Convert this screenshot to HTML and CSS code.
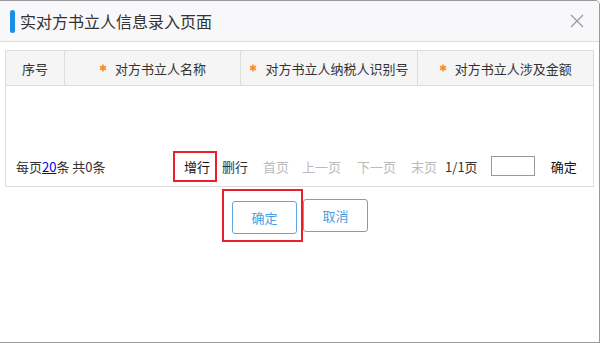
FILE: index.html
```html
<!DOCTYPE html>
<html lang="zh">
<head>
    <meta charset="utf-8">
    <title>实对方书立人信息录入页面</title>
    <link rel="stylesheet" href="styles.css">
</head>
<body>
    <div class="dialog">
        <div class="dialog-head">
            <span class="bar"></span>
            <span class="title">实对方书立人信息录入页面</span>
            <span class="close">
                <svg width="14" height="14" viewBox="0 0 14 14"><path d="M1 1L13 13M13 1L1 13" stroke="#999" stroke-width="1.2" fill="none"/></svg>
            </span>
        </div>
        <div class="grid">
            <div class="grid-head">
                <div class="cell c-no">序号</div>
                <div class="cell c-col"><svg class="star" width="8" height="8" viewBox="0 0 8 8"><path d="M4 0.5V7.5M1 2.2L7 5.8M7 2.2L1 5.8" stroke="#ff8a1f" stroke-width="1.6"/></svg>对方书立人名称</div>
                <div class="cell c-col"><svg class="star" width="8" height="8" viewBox="0 0 8 8"><path d="M4 0.5V7.5M1 2.2L7 5.8M7 2.2L1 5.8" stroke="#ff8a1f" stroke-width="1.6"/></svg>对方书立人纳税人识别号</div>
                <div class="cell c-col"><svg class="star" width="8" height="8" viewBox="0 0 8 8"><path d="M4 0.5V7.5M1 2.2L7 5.8M7 2.2L1 5.8" stroke="#ff8a1f" stroke-width="1.6"/></svg>对方书立人涉及金额</div>
            </div>
            <div class="grid-body"></div>
            <div class="pager">
                <span class="info">每页<a href="#">20</a>条 共0条</span>
                <span class="mark"><span class="act">增行</span></span>
                <span class="act del">删行</span>
                <span class="off first">首页</span>
                <span class="off prev">上一页</span>
                <span class="off next">下一页</span>
                <span class="off last">末页</span>
                <span class="pages">1/1页</span>
                <input class="goto" type="text">
                <span class="act go">确定</span>
            </div>
        </div>
        <div class="buttons">
            <span class="mark big"><button class="btn">确定</button></span>
            <button class="btn">取消</button>
        </div>
    </div>
</body>
</html>
```
FILE: styles.css
```css
body {
    margin: 0;
    font-family: "Noto Sans CJK SC", "Liberation Sans", sans-serif;
    font-size: 13px;
    color: #333;
    background: white;
}
.dialog {
    width: 600px;
    height: 343px;
    box-sizing: border-box;
    border: 1px solid #999;
    border-left: none;
    border-radius: 0 5px 0 0;
    overflow: hidden;
}
.dialog-head {
    height: 40px;
    display: flex;
    align-items: center;
    background-color: #f8f8fa;
    border-bottom: 1px solid #ddd;
}
.bar {
    width: 5px;
    height: 23px;
    margin-left: 10px;
    border-radius: 3px;
    background-color: #1890e8;
}
.title {
    margin-left: 5px;
    font-size: 16px;
    color: #333;
    flex: 1;
}
.close {
    width: 14px;
    height: 14px;
    margin-right: 15px;
    margin-top: -3px;
}
.grid {
    margin: 8px 0 0 5px;
    width: 589px;
    box-sizing: border-box;
    border: 1px solid #ddd;
}
.grid-head {
    display: flex;
    height: 34px;
    background-color: #f5f5f5;
    border-bottom: 1px solid #ddd;
}
.cell {
    display: flex;
    align-items: center;
    justify-content: center;
    border-right: 1px solid #ddd;
    color: #333;
}
.c-no {
    width: 58px;
}
.c-col {
    width: 176px;
}
.c-col:last-child {
    border-right: none;
}
.star {
    margin-right: 8px;
}
.grid-body {
    height: 60px;
}
.pager {
    display: flex;
    align-items: center;
    height: 40px;
    padding-left: 10px;
    color: #333;
}
.info {
    width: 157px;
}
.info a {
    color: #00e;
}
.pager .off {
    color: #bbb;
}
.mark {
    border: 2px solid #e8202a;
    padding: 4px 0 4px 9px;
    margin-right: 5px;
}
.pager .mark .act {
    margin-right: 5px;
    color: #111;
}
.pager .del {
    margin-right: 15px;
}
.pager .first {
    margin-right: 13px;
}
.pager .prev {
    margin-right: 16px;
}
.pager .next {
    margin-right: 15px;
}
.pager .last {
    margin-right: 8px;
}
.pager .pages {
    margin-right: 13px;
}
.goto {
    width: 44px;
    height: 20px;
    box-sizing: border-box;
    border: 1px solid #999;
    margin: 0 16px 0 0;
}
.pager .go {
    color: #111;
}
.buttons {
    display: flex;
    align-items: center;
    margin: 2px 0 0 222px;
}
.big {
    padding: 10px 4px 6px 8px;
    margin-right: 0;
}
.btn {
    width: 65px;
    height: 33px;
    background-color: white;
    border: 1px solid #5aa9e6;
    border-radius: 3px;
    color: #4a9de0;
    font-family: "Noto Sans CJK SC", sans-serif;
    font-size: 13px;
}
```
